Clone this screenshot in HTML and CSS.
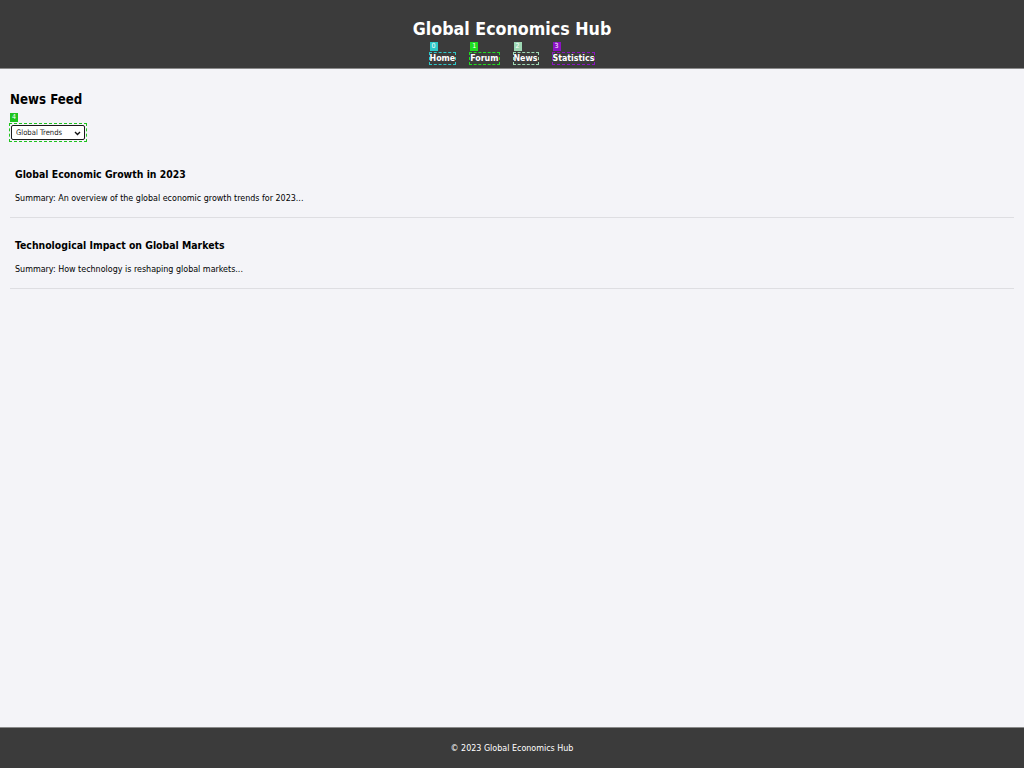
FILE: index.html
```html
<!DOCTYPE html>
<html lang="en">
<head>
<meta charset="utf-8">
<title>Global Economics Hub</title>
<link rel="stylesheet" href="styles.css">
</head>
<body>
<div class="page">
  <header class="site-header">
    <h1 class="site-title">Global Economics Hub</h1>
    <nav class="nav">
      <a class="nav-link mark-cyan" href="#"><span class="badge">0</span>Home</a>
      <a class="nav-link mark-green" href="#"><span class="badge">1</span>Forum</a>
      <a class="nav-link mark-mint" href="#"><span class="badge">2</span>News</a>
      <a class="nav-link mark-purple" href="#"><span class="badge">3</span>Statistics</a>
    </nav>
  </header>
  <main class="content">
    <h2 class="section-title">News Feed</h2>
    <div class="filter">
      <span class="badge badge-green">4</span>
      <select class="filter-select">
        <option>Global Trends</option>
      </select>
      <svg class="chevron" width="7" height="5" viewBox="0 0 7 5" aria-hidden="true"><path d="M1 1 L3.5 3.5 L6 1" fill="none" stroke="#111" stroke-width="1.4"/></svg>
    </div>
    <div class="news-list">
      <article class="news-item">
        <h3 class="news-title">Global Economic Growth in 2023</h3>
        <p class="news-summary">Summary: An overview of the global economic growth trends for 2023...</p>
      </article>
      <article class="news-item">
        <h3 class="news-title">Technological Impact on Global Markets</h3>
        <p class="news-summary">Summary: How technology is reshaping global markets...</p>
      </article>
    </div>
  </main>
  <footer class="site-footer">© 2023 Global Economics Hub</footer>
</div>
</body>
</html>
```

FILE: styles.css
```css
html, body {
  margin: 0;
  padding: 0;
}
body {
  background: #f4f4f8;
  font-family: "DejaVu Sans Condensed", "DejaVu Sans", sans-serif;
  color: #000;
}
.page {
  min-height: 768px;
  display: flex;
  flex-direction: column;
}
.site-header {
  background: #3b3b3b;
  border-bottom: 1px solid #8a8a8a;
  color: #fff;
  text-align: center;
  padding: 18px 0 3px;
}
.site-title {
  margin: 0;
  font-size: 17.7px;
  line-height: 22px;
  font-weight: bold;
}
.nav {
  display: flex;
  justify-content: center;
  gap: 13px;
  margin-top: 12px;
}
.nav-link {
  position: relative;
  color: #fff;
  font-weight: bold;
  font-size: 8.8px;
  text-decoration: none;
  line-height: 11px;
  padding: 0;
  border: 1px dashed transparent;
}
.badge {
  position: absolute;
  left: 0;
  top: -11px;
  min-width: 6px;
  padding: 0 1px;
  font-size: 7px;
  line-height: 9px;
  font-weight: normal;
  color: #fff;
  text-align: center;
}
.mark-cyan { border-color: #2cc8c8; }
.mark-cyan .badge { background: #2cc8c8; }
.mark-green { border-color: #1fdc1f; }
.mark-green .badge { background: #1fdc1f; }
.mark-mint { border-color: #9ed8b4; }
.mark-mint .badge { background: #9ed8b4; }
.mark-purple { border-color: #8c12c4; }
.mark-purple .badge { background: #8c12c4; }
.content {
  flex: 1;
  padding: 10px 10px;
}
.section-title {
  margin: 13px 0 15px;
  font-size: 13.2px;
  line-height: 16px;
  font-weight: bold;
}
.filter {
  position: relative;
  display: flex;
  width: max-content;
  margin-left: -1px;
  border: 1px dashed #1ec41e;
  padding: 1px;
}
.badge-green {
  background: #1ec41e;
  left: 0;
  top: -11px;
}
.filter-select {
  display: block;
  appearance: none;
  -webkit-appearance: none;
  font-family: "DejaVu Sans Condensed", "DejaVu Sans", sans-serif;
  font-size: 7.6px;
  color: #222;
  width: 74px;
  height: 15px;
  padding: 0 0 0 4px;
  border: 1px solid #1a1a1a;
  border-radius: 2px;
  background: #fff;
}
.chevron {
  position: absolute;
  right: 5px;
  top: 7px;
  pointer-events: none;
}
.news-list {
  padding-top: 5px;
}
.news-item {
  padding: 21px 5px 13px;
  border-bottom: 1px solid #dedee2;
}
.news-title {
  margin: 0 0 12px;
  font-size: 10.4px;
  line-height: 13px;
  font-weight: bold;
}
.news-summary {
  margin: 0;
  font-size: 8.9px;
  line-height: 11px;
}
.site-footer {
  background: #3b3b3b;
  border-top: 1px solid #8a8a8a;
  color: #fff;
  text-align: center;
  font-size: 8.9px;
  line-height: 11px;
  padding: 15px 0 14px;
}
```
